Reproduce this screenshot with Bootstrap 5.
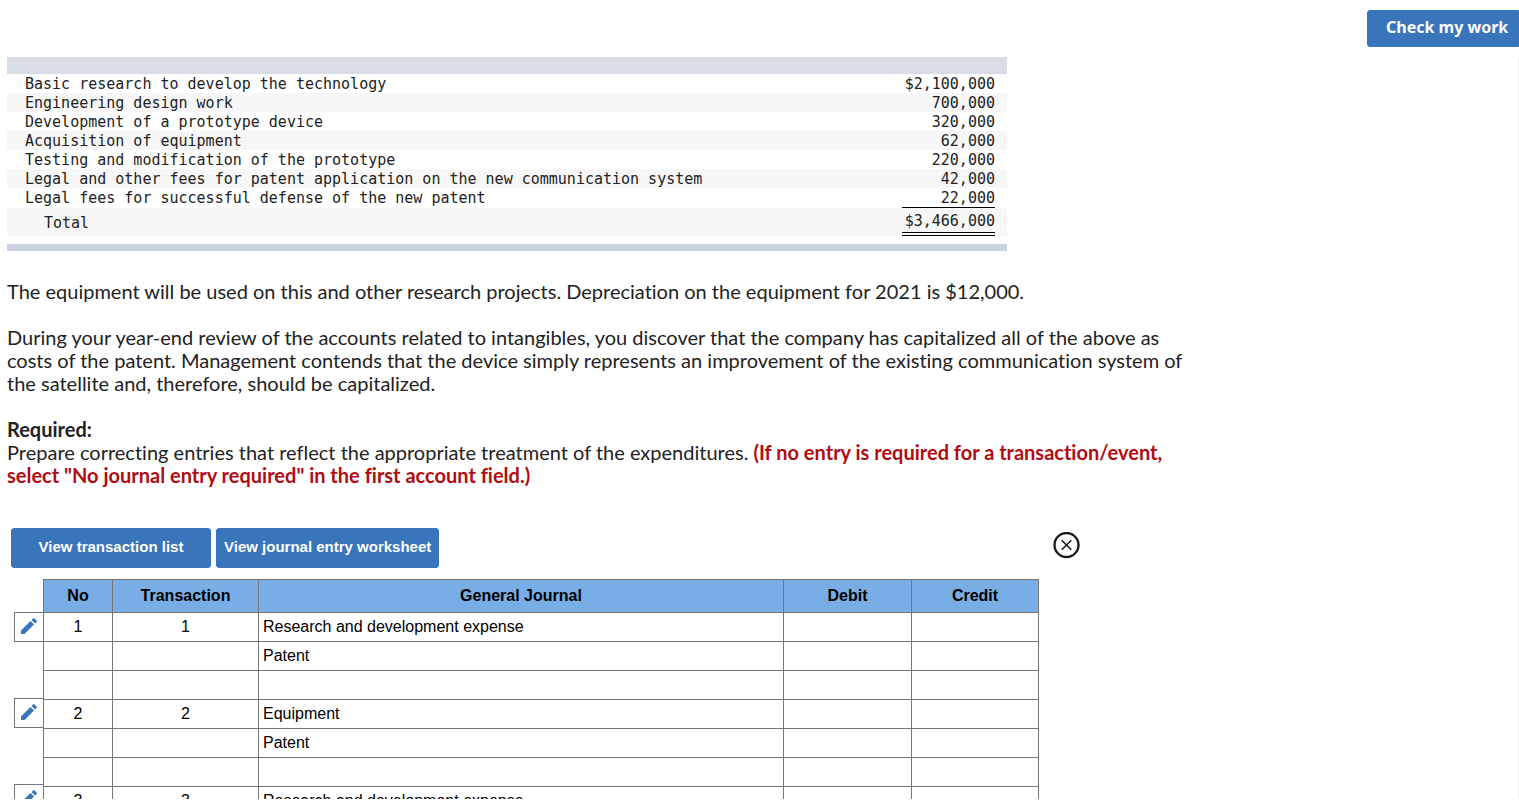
<!DOCTYPE html>
<html lang="en">
<head>
<meta charset="utf-8">
<meta name="viewport" content="width=device-width, initial-scale=1">
<title>Intangibles: correcting entries</title>
<link href="https://cdn.jsdelivr.net/npm/bootstrap@5.3.0/dist/css/bootstrap.min.css" rel="stylesheet">
<style>
  body { color: #222; background: #fff; }
  .app { padding-bottom: 7px; }
  .topbar { padding: 10px 0; }
  .btn-work {
    --bs-btn-bg: #3875ba; --bs-btn-color: #fff; --bs-btn-border-color: #3875ba;
    --bs-btn-hover-bg: #2c6098; --bs-btn-hover-color: #fff;
    --bs-btn-border-radius: 3px; --bs-btn-font-weight: 700;
    --bs-btn-padding-y: 0; --bs-btn-padding-x: 7px;
    --bs-btn-font-size: 15px;
    font-family: "Liberation Sans", Arial, sans-serif;
    height: 40px;
  }
  .btn-check-work {
    --bs-btn-font-size: 16px;
    font-family: "Noto Sans", sans-serif;
    width: 152px; height: 37px; padding: 0 11px 4px 18px;
    border-radius: 3px 0 0 3px;
  }
  .btn-list { min-width: 200px; }
  .question { border-right: 1px solid #ececec; padding-left: 7px; }
  .costs { max-width: 1000px; border-bottom: 7px solid #ccd3e0; font: 15px/17px "DejaVu Sans Mono", monospace; }
  .costs thead th { height: 17px; background: #d8dce6; }
  .costs tbody td, .costs tbody th { padding: 2px 12px 0 18px; font-weight: 400; height: 19px; vertical-align: top; }
  .costs tbody tr:nth-child(even) { background: #f7f7f7; }
  .costs .amount { display: block; width: 93px; margin-left: auto; }
  .costs .sum { border-bottom: 1px solid #000; }
  .costs .total { border-bottom: 4px double #000; line-height: 22px; }
  .costs tbody .indent { padding-left: 37px; vertical-align: middle; }
  .costs tfoot td { height: 11px; padding: 0; }
  .prose { max-width: 1190px; padding-top: 29px; font: 400 20px/23px "Lato", sans-serif; font-variant-ligatures: none; }
  .prose p { margin-bottom: 23px; }
  .prose b { font-weight: 700; }
  .prose .note { color: #b00c12; }
  .worksheet { max-width: 1073px; padding-left: 4px; margin-top: 41px; }
  .actions { gap: 5px; margin-bottom: 11px; }
  .journal { font: 16px/20px "Liberation Sans", Arial, sans-serif; color: #000; table-layout: fixed; width: 996px; }
  .journal th, .journal td { border: 1px solid #767676; padding: 0 4px; height: 29px; }
  .journal thead th { background: #78ade6; height: 33px; text-align: center; }
  .col-no { width: 69px; } .col-tx { width: 146px; } .col-debit { width: 128px; } .col-credit { width: 127px; }
  .edits { gap: 56px; padding: 33px 0 0 3px; margin-right: -1px; }
  .edit-btn { width: 30px; height: 30px; border: 1px solid #767676; background: #fff; padding: 0 0 2px; }
</style>
</head>
<body>
<div class="app vh-100 overflow-hidden d-flex flex-column">
  <header class="topbar d-flex justify-content-end flex-shrink-0">
    <button type="button" class="btn btn-work btn-check-work text-nowrap">Check my work</button>
  </header>
  <main class="question flex-fill overflow-hidden">
    <table class="costs w-100 mb-0">
      <thead><tr><th colspan="2"></th></tr></thead>
      <tbody>
        <tr><th scope="row">Basic research to develop the technology</th><td class="text-end"><span class="amount">$2,100,000</span></td></tr>
        <tr><th scope="row">Engineering design work</th><td class="text-end"><span class="amount">700,000</span></td></tr>
        <tr><th scope="row">Development of a prototype device</th><td class="text-end"><span class="amount">320,000</span></td></tr>
        <tr><th scope="row">Acquisition of equipment</th><td class="text-end"><span class="amount">62,000</span></td></tr>
        <tr><th scope="row">Testing and modification of the prototype</th><td class="text-end"><span class="amount">220,000</span></td></tr>
        <tr><th scope="row">Legal and other fees for patent application on the new communication system</th><td class="text-end"><span class="amount">42,000</span></td></tr>
        <tr><th scope="row">Legal fees for successful defense of the new patent</th><td class="text-end"><span class="amount sum">22,000</span></td></tr>
        <tr><th scope="row" class="indent">Total</th><td class="text-end"><span class="amount total">$3,466,000</span></td></tr>
      </tbody>
      <tfoot><tr><td colspan="2"></td></tr></tfoot>
    </table>
    <div class="prose">
      <p>The equipment will be used on this and other research projects. Depreciation on the equipment for 2021 is $12,000.</p>
      <p>During your year-end review of the accounts related to intangibles, you discover that the company has capitalized all of the above as costs of the patent. Management contends that the device simply represents an improvement of the existing communication system of the satellite and, therefore, should be capitalized.</p>
      <p><b>Required:</b><br>Prepare correcting entries that reflect the appropriate treatment of the expenditures. <b class="note">(If no entry is required for a transaction/event, select "No journal entry required" in the first account field.)</b></p>
    </div>
    <section class="worksheet">
      <div class="actions d-flex align-items-start">
        <button type="button" class="btn btn-work btn-list">View transaction list</button>
        <button type="button" class="btn btn-work">View journal entry worksheet</button>
        <button type="button" class="btn p-0 border-0 ms-auto mt-1 lh-1" aria-label="Close">
          <svg width="27" height="27" viewBox="0 0 27 27" fill="none" stroke="#1c1c1c" class="d-block"><circle cx="13.5" cy="13" r="12" stroke-width="2.4"/><path d="M8.700 8.200l9.600 9.600M18.300 8.200l-9.600 9.600" stroke-width="1.6"/></svg>
        </button>
      </div>
      <div class="d-flex align-items-start">
        <div class="edits d-flex flex-column">
          <button type="button" class="edit-btn d-flex align-items-center justify-content-center" aria-label="Edit entry 1"><svg width="18" height="18" viewBox="0 0 18 18" fill="#3875ba"><path d="M1 13.500L10.500 4l3.500 3.500L4.500 17H1zM11.500 3l1.600-1.600q.8-.7 1.500 0l2 2q.7.800 0 1.500L15 6.500z"/></svg></button>
          <button type="button" class="edit-btn d-flex align-items-center justify-content-center" aria-label="Edit entry 2"><svg width="18" height="18" viewBox="0 0 18 18" fill="#3875ba"><path d="M1 13.500L10.500 4l3.500 3.500L4.500 17H1zM11.500 3l1.600-1.600q.8-.7 1.500 0l2 2q.7.800 0 1.500L15 6.500z"/></svg></button>
          <button type="button" class="edit-btn d-flex align-items-center justify-content-center" aria-label="Edit entry 3"><svg width="18" height="18" viewBox="0 0 18 18" fill="#3875ba"><path d="M1 13.500L10.500 4l3.500 3.500L4.500 17H1zM11.500 3l1.600-1.600q.8-.7 1.500 0l2 2q.7.800 0 1.500L15 6.500z"/></svg></button>
        </div>
        <table class="journal mb-0">
          <colgroup><col class="col-no"><col class="col-tx"><col><col class="col-debit"><col class="col-credit"></colgroup>
          <thead><tr><th>No</th><th>Transaction</th><th>General Journal</th><th>Debit</th><th>Credit</th></tr></thead>
          <tbody>
            <tr><td class="text-center">1</td><td class="text-center">1</td><td>Research and development expense</td><td></td><td></td></tr>
            <tr><td></td><td></td><td>Patent</td><td></td><td></td></tr>
            <tr><td></td><td></td><td></td><td></td><td></td></tr>
            <tr><td class="text-center">2</td><td class="text-center">2</td><td>Equipment</td><td></td><td></td></tr>
            <tr><td></td><td></td><td>Patent</td><td></td><td></td></tr>
            <tr><td></td><td></td><td></td><td></td><td></td></tr>
            <tr><td class="text-center">3</td><td class="text-center">3</td><td>Research and development expense</td><td></td><td></td></tr>
          </tbody>
        </table>
      </div>
    </section>
  </main>
</div>
<script src="https://cdn.jsdelivr.net/npm/bootstrap@5.3.0/dist/js/bootstrap.bundle.min.js"></script>
</body>
</html>
